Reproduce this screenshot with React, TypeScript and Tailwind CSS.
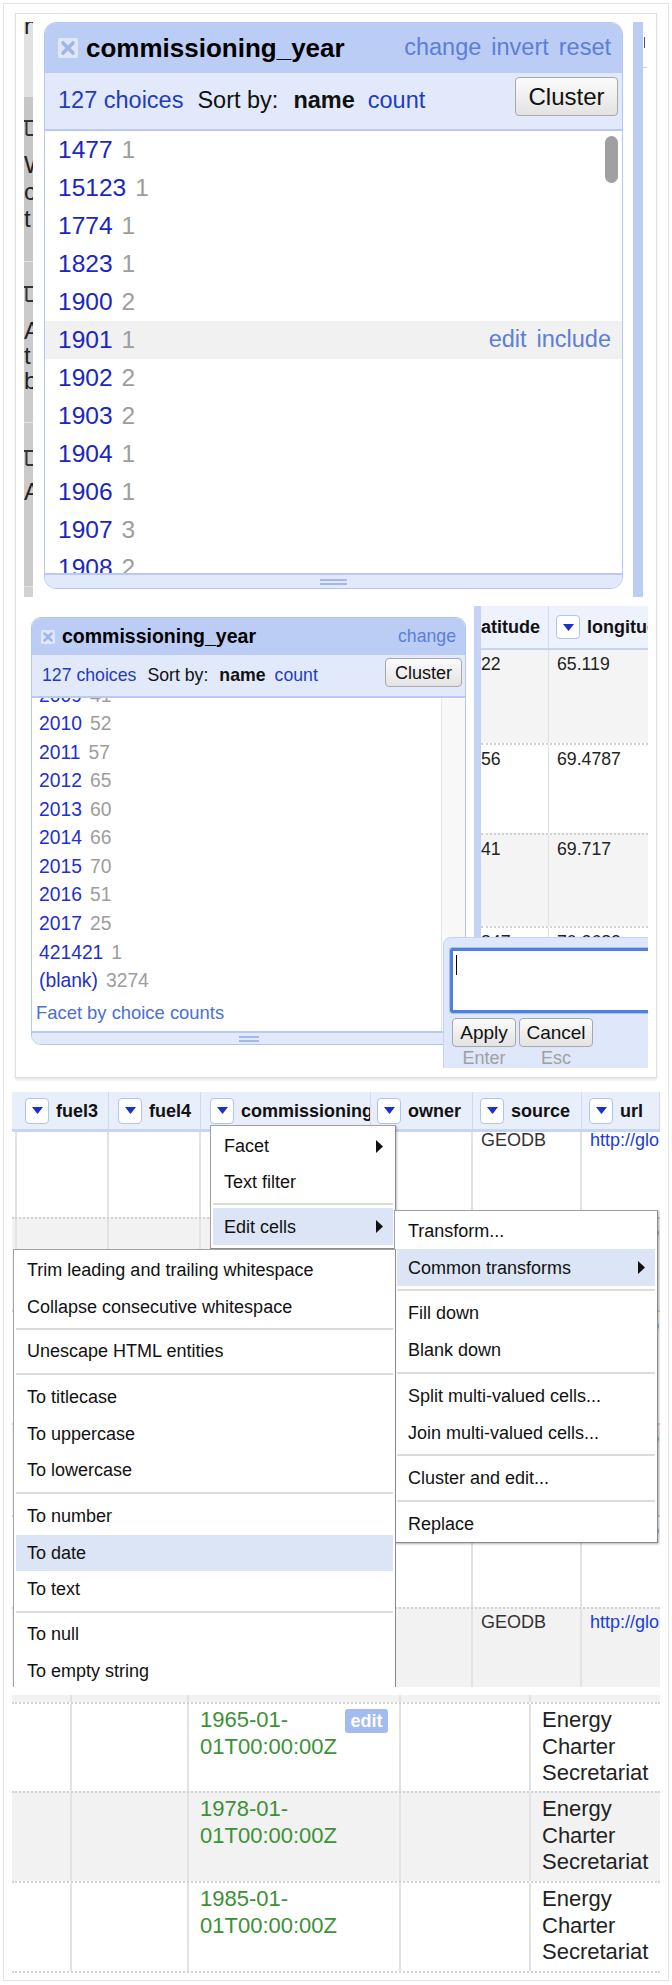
import React from 'react';

const FONT = "font-['Liberation_Sans',Arial,Helvetica,sans-serif]";

function CloseIcon({ size }: { size: number }) {
  return (
    <svg width={size} height={size} viewBox="0 0 20 20" className="shrink-0">
      <rect x="0" y="0" width="20" height="20" rx="2" fill="#dfe6fb" />
      <path d="M5 5 L15 15 M15 5 L5 15" stroke="#a2b5ea" strokeWidth="3.6" strokeLinecap="round" />
    </svg>
  );
}

function DropBtn({ className = '' }: { className?: string }) {
  return (
    <span className={`flex items-center justify-center shrink-0 bg-white border border-[#b1c3ef] rounded-[4px] ${className}`}>
      <svg width="11" height="7" viewBox="0 0 11 7">
        <path d="M0 0 H11 L5.5 7 Z" fill="#1b31cf" />
      </svg>
    </span>
  );
}

function Arrow() {
  return (
    <svg width="7" height="13" viewBox="0 0 7 13" className="shrink-0">
      <path d="M0 0 L7 6.5 L0 13 Z" fill="#111" />
    </svg>
  );
}

function Btn({ className, children }: { className: string; children: React.ReactNode }) {
  return (
    <div
      className={`flex items-center justify-center shrink-0 rounded-[4px] border border-[#a8a8a8] bg-gradient-to-b from-[#fbfbfb] to-[#e3e3e3] text-[#111] leading-none ${className}`}
    >
      {children}
    </div>
  );
}

function Grip({ className }: { className: string }) {
  return (
    <div className="flex flex-col gap-[2px]">
      <div className={`h-[2px] bg-[#a3b8ec] ${className}`} />
      <div className={`h-[2px] bg-[#a3b8ec] ${className}`} />
    </div>
  );
}

function PageGlyph() {
  return (
    <svg width="12" height="18" viewBox="0 0 12 18" className="block">
      <path d="M0 2 H12 M2.5 3 V16 M2.5 16 H9" stroke="#333" strokeWidth="2" fill="none" />
    </svg>
  );
}

function SideStrip() {
  return (
    <div className="w-[9px] h-full shrink-0 flex flex-col overflow-hidden text-[24px] text-[#222]">
      <div className="h-[75px] shrink-0 bg-[#e1e1e1] leading-[25px]">
        <div className="mt-[-9px]">n</div>
      </div>
      <div className="h-[165px] shrink-0 bg-[#c6c6c6] border-b border-[#e4e4e4] pt-[22px] leading-[27px]">
        <PageGlyph />
        <div className="mt-[14px]">W</div>
        <div>c</div>
        <div>t</div>
      </div>
      <div className="h-[161px] shrink-0 bg-[#cbcbcb] border-b border-[#e4e4e4] pt-[23px] leading-[25px]">
        <PageGlyph />
        <div className="mt-[15px]">A</div>
        <div>t</div>
        <div>b</div>
      </div>
      <div className="h-[164px] shrink-0 bg-[#cbcbcb] border-b border-[#e4e4e4] pt-[26px] leading-[25px]">
        <PageGlyph />
        <div className="mt-[12px]">A</div>
      </div>
      <div className="flex-1 bg-[#d2d2d2]" />
    </div>
  );
}

const list1: [string, string][] = [
  ['1477', '1'],
  ['15123', '1'],
  ['1774', '1'],
  ['1823', '1'],
  ['1900', '2'],
  ['1901', '1'],
  ['1902', '2'],
  ['1903', '2'],
  ['1904', '1'],
  ['1906', '1'],
  ['1907', '3'],
  ['1908', '2'],
];

function ShotOne() {
  return (
    <div className="ml-[8px] mt-[8px] w-[623px] h-[575px] overflow-hidden flex items-start">
      <SideStrip />
      <div className="ml-[11px] w-[579px] h-[567px] shrink-0 flex flex-col border border-[#b3c5f1] rounded-[12px] overflow-hidden bg-white">
        <div className="h-[50px] shrink-0 bg-[#bccdf5] flex items-center pl-[13px] pr-[11px]">
          <CloseIcon size={20} />
          <span className="ml-[8px] text-[26px] font-bold text-black leading-none">commissioning_year</span>
          <div className="ml-auto flex gap-[10px] text-[23.5px] text-[#5b7fd7] leading-none">
            <span>change</span>
            <span>invert</span>
            <span>reset</span>
          </div>
        </div>
        <div className="h-[58px] shrink-0 bg-[#e2e9fb] border-b-2 border-[#b8c9f2] flex items-center pl-[13px] pr-[4px] text-[23.5px] leading-none">
          <span className="text-[#1f3cc0]">127 choices</span>
          <span className="ml-[14px] text-[#111]">Sort by:</span>
          <span className="ml-[15px] font-bold text-[#111]">name</span>
          <span className="ml-[13px] text-[#1f3cc0]">count</span>
          <Btn className="ml-auto self-start mt-[4px] w-[103px] h-[39px] text-[24px]">Cluster</Btn>
        </div>
        <div className="flex-1 relative overflow-hidden bg-white">
          {list1.map(([n, c]) => (
            <div
              key={n}
              className={`h-[38px] flex items-center pl-[13px] pr-[11px] text-[24.5px] leading-none ${
                n === '1901' ? 'bg-[#f1f1f1]' : ''
              }`}
            >
              <span className="text-[#1a26c2]">{n}</span>
              <span className="ml-[9px] text-[#9d9d9d]">{c}</span>
              {n === '1901' && (
                <span className="ml-auto flex gap-[10px] text-[23.5px] text-[#5b7fd7]">
                  <span>edit</span>
                  <span>include</span>
                </span>
              )}
            </div>
          ))}
          <div className="absolute right-[4px] top-[5px] w-[13px] h-[47px] rounded-full bg-[#a0a0a0]" />
        </div>
        <div className="h-[15px] shrink-0 bg-[#e2e9fb] border-t-2 border-[#b8c9f2] flex items-center justify-center">
          <Grip className="w-[27px]" />
        </div>
      </div>
      <div className="ml-[10px] w-[10px] h-full shrink-0 bg-[#bccdf5]" />
      <div className="w-[4px] h-full shrink-0 flex flex-col">
        <div className="h-[15px]" />
        <div className="ml-[1px] w-px h-[11px] bg-[#555]" />
        <div className="h-[19px]" />
        <div className="h-px bg-[#cfcfcf]" />
      </div>
    </div>
  );
}

const list2: [string, string][] = [
  ['2009', '41'],
  ['2010', '52'],
  ['2011', '57'],
  ['2012', '65'],
  ['2013', '60'],
  ['2014', '66'],
  ['2015', '70'],
  ['2016', '51'],
  ['2017', '25'],
  ['421421', '1'],
  ['(blank)', '3274'],
];

const rows2 = [
  { h: 'h-[93px]', bg: 'bg-[#f4f4f4]', a: '22', b: '65.119', top: '' },
  { h: 'h-[90px]', bg: 'bg-white', a: '56', b: '69.4787', top: 'border-t-2 border-dotted border-[#d2d2d2]' },
  { h: 'h-[93px]', bg: 'bg-[#f4f4f4]', a: '41', b: '69.717', top: 'border-t-2 border-dotted border-[#d2d2d2]' },
  { h: 'h-[100px]', bg: 'bg-white', a: '847', b: '70.2682', top: 'border-t-2 border-dotted border-[#d2d2d2]' },
];

function ShotTwo() {
  return (
    <div className="ml-[15px] mt-[9px] w-[617px] h-[462px] relative overflow-hidden flex items-start">
      <div className="mt-[11px] w-[435px] shrink-0 flex flex-col border border-[#b3c5f1] rounded-[10px] overflow-hidden bg-white">
        <div className="h-[37px] shrink-0 bg-[#bccdf5] flex items-center pl-[9px] pr-[9px]">
          <CloseIcon size={14} />
          <span className="ml-[7px] text-[19.5px] font-bold text-black leading-none">commissioning_year</span>
          <span className="ml-auto text-[17.7px] text-[#5b7fd7] leading-none">change</span>
        </div>
        <div className="h-[43px] shrink-0 bg-[#e2e9fb] border-b-2 border-[#b8c9f2] flex items-center pl-[10px] pr-[3px] text-[17.7px] leading-none">
          <span className="text-[#1f3cc0]">127 choices</span>
          <span className="ml-[11px] text-[#111]">Sort by:</span>
          <span className="ml-[11px] font-bold text-[#111]">name</span>
          <span className="ml-[9px] text-[#1f3cc0]">count</span>
          <Btn className="ml-auto self-start mt-[3px] w-[77px] h-[29px] text-[18px]">Cluster</Btn>
        </div>
        <div className="h-[333px] shrink-0 flex overflow-hidden bg-white">
          <div className="flex-1 overflow-hidden pl-[7px]">
            <div className="mt-[-17px]">
              {list2.map(([n, c]) => (
                <div key={n} className="h-[28.56px] flex items-center text-[19.3px] leading-none">
                  <span className="text-[#1f2fd0]">{n}</span>
                  <span className="ml-[8px] text-[#9d9d9d]">{c}</span>
                </div>
              ))}
              <div className="mt-[4px] ml-[-3px] text-[18.4px] leading-[28px] text-[#4a6fd6]">Facet by choice counts</div>
            </div>
          </div>
          <div className="w-[24px] shrink-0 bg-[#f8f8f8] border-l border-[#e6e6e6]" />
        </div>
        <div className="h-[13px] shrink-0 bg-[#e2e9fb] border-t-2 border-[#b8c9f2] flex items-center justify-center">
          <Grip className="w-[20px]" />
        </div>
      </div>

      <div className="ml-[8px] w-[174px] h-full shrink-0 border-l-[7px] border-[#c3d2f5] flex flex-col bg-white">
        <div className="h-[44px] shrink-0 bg-[#eef2fc] border-b-2 border-[#c6d4f5] flex text-[18px] font-bold text-[#111] leading-none">
          <div className="w-[68px] shrink-0 border-r border-[#d3dcf4] overflow-hidden flex items-center">
            <span className="ml-[-5px]">latitude</span>
          </div>
          <div className="flex-1 flex items-center pl-[7px] gap-[7px] overflow-hidden whitespace-nowrap">
            <DropBtn className="w-[24px] h-[24px]" />
            <span>longitude</span>
          </div>
        </div>
        {rows2.map((r) => (
          <div key={r.a} className={`shrink-0 flex ${r.h} ${r.bg} ${r.top}`}>
            <div className="w-[68px] shrink-0 border-r border-[#e0e0e0] pt-[3px] text-[17.7px] leading-[22px] text-[#222] overflow-hidden">
              {r.a}
            </div>
            <div className="flex-1 pt-[3px] pl-[8px] text-[17.7px] leading-[22px] text-[#222] whitespace-nowrap">{r.b}</div>
          </div>
        ))}
      </div>

      <div className="absolute left-[412px] top-[331px] w-[260px] h-[140px] z-10 bg-[#dfe7fb] border border-[#c5d3f5] rounded-tl-[8px] pl-[6px] pt-[10px]">
        <div className="w-[260px] h-[65px] bg-white border-[3px] border-[#4f7fe2] rounded-[3px] shadow-[0_0_0_1px_#a9c1f2] pl-[3px] pt-[4px]">
          <div className="w-px h-[20px] bg-black" />
        </div>
        <div className="flex gap-[3px] mt-[5px] ml-[2px]">
          <div className="flex flex-col items-center">
            <Btn className="w-[64px] h-[29px] text-[19px]">Apply</Btn>
            <span className="text-[18px] leading-[22px] text-[#a0a0a0]">Enter</span>
          </div>
          <div className="flex flex-col items-center">
            <Btn className="w-[74px] h-[29px] text-[19px]">Cancel</Btn>
            <span className="text-[18px] leading-[22px] text-[#a0a0a0]">Esc</span>
          </div>
        </div>
      </div>
    </div>
  );
}

type MenuRow = { label?: string; h: string; active?: boolean; arrow?: boolean; sep?: boolean };

function Menu({ rows, className }: { rows: MenuRow[]; className: string }) {
  return (
    <div className={`absolute bg-white border border-[#a2a2a2] border-r-[#8a8a8a] border-b-[#8a8a8a] ${className}`}>
      {rows.map((r, i) =>
        r.sep ? (
          <div key={i} className={`mx-[2px] flex items-center ${r.h}`}>
            <div className="w-full h-[2px] bg-[#dcdcdc]" />
          </div>
        ) : (
          <div
            key={i}
            className={`mx-[2px] pl-[11px] pr-[10px] flex items-center justify-between whitespace-nowrap text-[18px] leading-none text-[#111] ${r.h} ${
              r.active ? 'bg-[#dbe5f5]' : ''
            }`}
          >
            <span>{r.label}</span>
            {r.arrow && <Arrow />}
          </div>
        )
      )}
    </div>
  );
}

const menu1: MenuRow[] = [
  { label: 'Facet', h: 'h-[36px]', arrow: true },
  { label: 'Text filter', h: 'h-[36px]' },
  { sep: true, h: 'h-[8px]' },
  { label: 'Edit cells', h: 'h-[37px]', active: true, arrow: true },
];

const menu2: MenuRow[] = [
  { label: 'Transform...', h: 'h-[37px]' },
  { label: 'Common transforms', h: 'h-[37px]', active: true, arrow: true },
  { sep: true, h: 'h-[8px]' },
  { label: 'Fill down', h: 'h-[37px]' },
  { label: 'Blank down', h: 'h-[37px]' },
  { sep: true, h: 'h-[9px]' },
  { label: 'Split multi-valued cells...', h: 'h-[37px]' },
  { label: 'Join multi-valued cells...', h: 'h-[37px]' },
  { sep: true, h: 'h-[8px]' },
  { label: 'Cluster and edit...', h: 'h-[37px]' },
  { sep: true, h: 'h-[9px]' },
  { label: 'Replace', h: 'h-[37px]' },
];

const menu3: MenuRow[] = [
  { label: 'Trim leading and trailing whitespace', h: 'h-[36.5px]' },
  { label: 'Collapse consecutive whitespace', h: 'h-[36.5px]' },
  { sep: true, h: 'h-[8px]' },
  { label: 'Unescape HTML entities', h: 'h-[36.5px]' },
  { sep: true, h: 'h-[9.5px]' },
  { label: 'To titlecase', h: 'h-[36.5px]' },
  { label: 'To uppercase', h: 'h-[36.5px]' },
  { label: 'To lowercase', h: 'h-[36.5px]' },
  { sep: true, h: 'h-[9.5px]' },
  { label: 'To number', h: 'h-[36.5px]' },
  { label: 'To date', h: 'h-[36.5px]', active: true },
  { label: 'To text', h: 'h-[36.5px]' },
  { sep: true, h: 'h-[8.5px]' },
  { label: 'To null', h: 'h-[36.5px]' },
  { label: 'To empty string', h: 'h-[36.5px]' },
];

const head3 = [
  { cls: 'w-[97px] pl-[13px]', label: 'fuel3' },
  { cls: 'w-[92px] pl-[9px]', label: 'fuel4' },
  { cls: 'w-[170px] pl-[9px]', label: 'commissioning_year' },
  { cls: 'w-[102px] pl-[6px]', label: 'owner' },
  { cls: 'w-[109px] pl-[7px]', label: 'source' },
  { cls: 'w-[78px] pl-[7px]', label: 'url' },
];

const rows3 = [
  { h: 'h-[85px]', bg: 'bg-white', top: '', pad: 'mt-[-3px]' },
  { h: 'h-[93px]', bg: 'bg-[#f2f2f2]', top: 'border-t-2 border-dotted border-[#d2d2d2]', pad: 'pt-[2px]' },
  { h: 'h-[113px]', bg: 'bg-white', top: 'border-t-2 border-dotted border-[#d2d2d2]', pad: 'pt-[2px]' },
  { h: 'h-[92px]', bg: 'bg-[#f2f2f2]', top: 'border-t-2 border-dotted border-[#d2d2d2]', pad: 'pt-[2px]' },
  { h: 'h-[92px]', bg: 'bg-white', top: 'border-t-2 border-dotted border-[#d2d2d2]', pad: 'pt-[2px]' },
  { h: 'h-[80px]', bg: 'bg-[#f2f2f2]', top: 'border-t-2 border-dotted border-[#d2d2d2]', pad: 'pt-[2px]' },
];

function ShotThree() {
  return (
    <div className="ml-[8px] mt-[14px] w-[648px] h-[595px] relative overflow-hidden flex flex-col">
      <div className="h-[40px] shrink-0 flex bg-[#e9eefb] border-b-[3px] border-[#c6d4f5] text-[18px] font-bold text-[#111] leading-none">
        {head3.map((c) => (
          <div
            key={c.label}
            className={`shrink-0 flex items-center gap-[7px] overflow-hidden whitespace-nowrap border-r border-[#cfd9f3] ${c.cls}`}
          >
            <DropBtn className="w-[24px] h-[26px]" />
            <span>{c.label}</span>
          </div>
        ))}
      </div>
      {rows3.map((r, i) => (
        <div key={i} className={`shrink-0 flex overflow-hidden ${r.h} ${r.bg} ${r.top}`}>
          <div className="w-[5px] shrink-0 border-r-2 border-[#e2e2e2]" />
          <div className="w-[92px] shrink-0 border-r-2 border-[#e2e2e2]" />
          <div className="w-[92px] shrink-0 border-r-2 border-[#e2e2e2]" />
          <div className="w-[170px] shrink-0 border-r-2 border-[#e2e2e2]" />
          <div className="w-[102px] shrink-0 border-r-2 border-[#e2e2e2]" />
          <div className="w-[109px] shrink-0 border-r-2 border-[#e2e2e2] pl-[8px] overflow-hidden">
            <div className={`text-[18px] leading-[22px] text-[#333] ${r.pad}`}>GEODB</div>
          </div>
          <div className="w-[78px] shrink-0 pl-[8px] overflow-hidden whitespace-nowrap">
            <div className={`text-[18px] leading-[22px] text-[#1b3ed6] ${r.pad}`}>http://globalenergyobservatory.org</div>
          </div>
        </div>
      ))}

      <Menu rows={menu1} className="left-[198px] top-[33px] w-[186px] h-[124px] z-10 pt-[2px] shadow-[1px_1px_2px_rgba(0,0,0,0.25)]" />
      <Menu rows={menu2} className="left-[382px] top-[118px] w-[264px] z-20 pt-[1px] shadow-[1px_1px_2px_rgba(0,0,0,0.3)]" />
      <Menu rows={menu3} className="left-[1px] top-[157px] w-[383px] h-[460px] z-30 pt-[2px]" />
    </div>
  );
}

const cols4 = ['w-[60px]', 'w-[117px]', 'w-[212px]', 'w-[130px]', 'w-[129px]'];

const rows4 = [
  { date: '1965-01-', h: 'h-[89px]', bg: 'bg-white', edit: true },
  { date: '1978-01-', h: 'h-[90px]', bg: 'bg-[#f2f2f2]', edit: false },
  { date: '1985-01-', h: 'h-[90px]', bg: 'bg-white', edit: false },
];

function ShotFour() {
  return (
    <div className="ml-[8px] mt-[8px] w-[648px] flex flex-col">
      <div className="h-[7px] flex bg-[#f2f2f2]">
        {cols4.map((w, i) => (
          <div key={i} className={`shrink-0 ${w} ${i < 4 ? 'border-r-2 border-[#e2e2e2]' : ''}`} />
        ))}
      </div>
      {rows4.map((r) => (
        <div key={r.date} className={`flex border-t-2 border-dotted border-[#d2d2d2] ${r.h} ${r.bg}`}>
          <div className="w-[60px] shrink-0 border-r-2 border-[#e2e2e2]" />
          <div className="w-[117px] shrink-0 border-r-2 border-[#e2e2e2]" />
          <div className="w-[212px] shrink-0 border-r-2 border-[#e2e2e2] relative pl-[11px] pt-[3px] text-[22px] leading-[26.5px] text-[#3b9135]">
            <div>{r.date}</div>
            <div>01T00:00:00Z</div>
            {r.edit && (
              <div className="absolute left-[156px] top-[5px] w-[43px] h-[24px] rounded-[3px] bg-[#a3bbf0] text-white font-bold text-[18px] leading-none flex items-center justify-center">
                edit
              </div>
            )}
          </div>
          <div className="w-[130px] shrink-0 border-r-2 border-[#e2e2e2]" />
          <div className="w-[129px] shrink-0 pl-[11px] pt-[3px] text-[22px] leading-[26.5px] text-[#222]">
            <div>Energy</div>
            <div>Charter</div>
            <div>Secretariat</div>
          </div>
        </div>
      ))}
      <div className="border-t-2 border-dotted border-[#d2d2d2]" />
    </div>
  );
}

export default function App() {
  return (
    <div className={`w-[672px] min-h-[1985px] bg-white pt-[3px] px-[3px] ${FONT}`}>
      <div className="h-[1978px] border border-[#e4e4e4]">
        <div className="ml-[11px] mt-[9px] w-[642px] h-[1065px] border border-[#e0e0e0] shadow-[0_2px_3px_rgba(0,0,0,0.1)]">
          <ShotOne />
          <ShotTwo />
        </div>
        <ShotThree />
        <ShotFour />
      </div>
    </div>
  );
}
